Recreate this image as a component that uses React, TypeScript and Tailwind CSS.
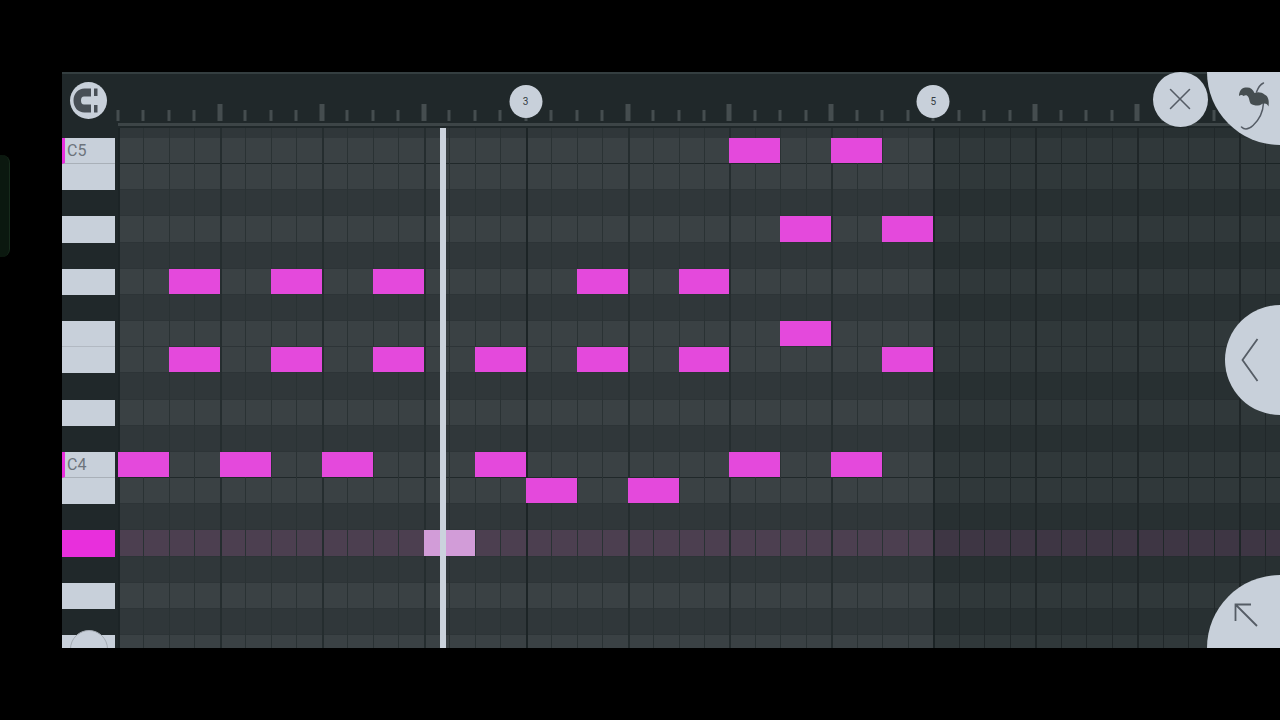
import { X } from 'lucide-react';

const STEPS = 96;
const ROWS = 24;
const PATTERN_END = 32;
const ACTIVE_ROW = 15;

// Counted downwards from C
const BLACK_KEYS = [2, 4, 6, 9, 11];

const NOTES: { row: number; steps: number[] }[] = [
  { row: 0, steps: [24, 28] },
  { row: 3, steps: [26, 30] },
  { row: 5, steps: [2, 6, 10, 18, 22] },
  { row: 7, steps: [26] },
  { row: 8, steps: [2, 6, 10, 14, 18, 22, 30] },
  { row: 12, steps: [0, 4, 8, 14, 24, 28] },
  { row: 13, steps: [16, 20] },
  { row: 15, steps: [12] },
];

const rows = Array.from({ length: ROWS }, (_, i) => i);
const steps = Array.from({ length: STEPS }, (_, i) => i);
const isBlack = (row: number) => BLACK_KEYS.includes(row % 12);

function MagnetIcon() {
  return (
    <svg viewBox="0 0 37 37" className="size-full" fill="#484f56" aria-hidden="true">
      <path d="M21 6.500H14.500C8 6.500 3.500 11.500 3.500 18.500S8 30.500 14.500 30.500H21V22.500H14Q11 22.500 11 18.500T14 14.500H21Z" />
      <path d="M24 6.500h3.500v7.500H24zM24 23h3.500v7.500H24z" />
    </svg>
  );
}

function UmbrellaIcon() {
  return (
    <svg viewBox="0 0 32 50" className="h-[50px] w-8" aria-hidden="true">
      <path d="M25.500 1C22 2.500 20 6 18.500 10M25.500 21C25 30 21 38 15 43.500C10 48 6 47.500 3.500 45" fill="none" stroke="#555c65" strokeWidth="1.500" strokeLinecap="round" />
      <path d="M1 14C1 9 4 5 8 5.500C12 5 15 7 16.500 11C20 9.500 24 10.500 26.500 12.500C30 14 31.500 18 30.500 24.500C29.500 22.500 28.500 21.500 26.500 21.500C24 21 23 23.500 20 23.500C16.500 23.500 14.500 23 12.500 21.500C11 19 11.500 16 10 14.500C8.500 12.500 7 13 5.500 14C4 12.500 2.500 13 1 14Z" fill="#464e51" />
    </svg>
  );
}

function Ruler() {
  return (
    <div className="grid h-[49px] w-[2446px] shrink-0 grid-cols-[repeat(96,minmax(0,1fr))]">
      {steps.map((step) => {
        const bar = step % 16 === 0;
        const beat = step % 4 === 0 && !bar;
        return (
          <div key={step} className="relative flex items-end pb-[2px]">
            <span className={beat ? 'h-[17px] w-[5px] -translate-x-1/2 bg-[#454d4f]' : 'h-[11px] w-[3px] -translate-x-1/2 bg-[#454d4f]'} />
            {bar && step > 0 && step <= PATTERN_END && (
              <span className="absolute bottom-[5px] left-0 flex size-[33px] -translate-x-1/2 items-center justify-center rounded-full bg-[#c8d0da] text-[10px] text-[#353c42]">
                {step / 8 + 1}
              </span>
            )}
          </div>
        );
      })}
    </div>
  );
}

function Keyboard() {
  return (
    <div className="w-14 shrink-0 overflow-hidden pt-[10px] pr-[3px]">
      <div className="grid h-[628px] grid-rows-[repeat(24,minmax(0,1fr))]">
        {rows.map((row) => {
          if (isBlack(row)) return <button key={row} type="button" aria-label="Black key" className="bg-[#20282a]" />;
          if (row === ACTIVE_ROW) return <button key={row} type="button" aria-label="A3" className="bg-[#e82fdc]" />;
          if (row % 12 === 0) {
            return (
              <button key={row} type="button" className="flex items-center border-b border-l-[3px] border-b-[#a9b0b8] border-l-[#e82fdc] bg-[#c8d0da] pl-[2px] text-base text-[#6d747c]">
                C{5 - row / 12}
              </button>
            );
          }
          return (
            <button key={row} type="button" aria-label="White key" className={row % 12 === 7 ? 'border-b border-[#b2b9c2] bg-[#c8d0da]' : 'bg-[#c8d0da]'} />
          );
        })}
      </div>
    </div>
  );
}

function rowColor(row: number) {
  if (row === ACTIVE_ROW) return 'bg-[#4c3f50]';
  return isBlack(row) ? 'bg-[#30373a]' : 'bg-[#3a4144]';
}

function lineColor(step: number) {
  if (step % 16 === 0) return 'border-l-2 border-[#1c2426]';
  if (step % 4 === 0) return step > PATTERN_END ? 'border-l-2 border-[#1f2628]' : 'border-l-2 border-[#252d2f]';
  return step > PATTERN_END ? 'border-l border-[#21282a]' : 'border-l border-[#2a3234]';
}

function NoteGrid() {
  return (
    <div className="relative min-w-0 flex-1 overflow-hidden bg-[#30373a]">
      <div className="grid h-[638px] w-[2446px] grid-cols-[repeat(96,minmax(0,1fr))] grid-rows-[10px_repeat(24,minmax(0,1fr))]">
        {rows.map((row) => (
          <div
            key={row}
            className={`col-span-full border-b ${row % 12 === 0 ? 'border-[#20282a]' : 'border-[#2d3437]'} ${rowColor(row)}`}
            style={{ gridRow: row + 2 }}
          />
        ))}
        <div className="bg-[#0a1414]/20" style={{ gridColumn: `${PATTERN_END + 1} / -1`, gridRow: '1 / -1' }} />
        {steps.map((step) => (
          <div key={step} className={lineColor(step)} style={{ gridColumn: step + 1, gridRow: '1 / -1' }} />
        ))}
        {NOTES.map(({ row, steps: starts }) =>
          starts.map((start) => (
            <button
              key={`${row}-${start}`}
              type="button"
              aria-label="Note"
              className={row === ACTIVE_ROW ? 'mb-px bg-[#d29cd8]' : 'mb-px bg-[#e449dc]'}
              style={{ gridColumn: `${start + 1} / span 2`, gridRow: row + 2 }}
            />
          )),
        )}
      </div>
      <div className="absolute inset-y-0 left-[322px] w-[6px] bg-[#cbd3dd]" />
    </div>
  );
}

export default function App() {
  return (
    <div className="relative flex h-screen overflow-hidden bg-black py-[72px] pl-[62px] font-[Roboto,sans-serif]">
      <div className="absolute top-[155px] left-0 h-[102px] w-[10px] rounded-r-lg border-r border-[#172b1c] bg-[#0b180f]" />

      <main className="relative flex min-w-0 flex-1 flex-col overflow-hidden bg-[#20282a]">
        <header className="flex h-14 shrink-0 border-t-2 border-[#343e40]">
          <div className="w-14 shrink-0 px-2 pt-2">
            <button type="button" aria-label="Snap" className="size-[37px] rounded-full bg-[#c8d0da]">
              <MagnetIcon />
            </button>
          </div>
          <div className="min-w-0 flex-1">
            <Ruler />
            <div className="h-[3px] bg-[#3d4547]" />
          </div>
        </header>
        <div className="flex min-h-0 flex-1">
          <Keyboard />
          <NoteGrid />
        </div>

        <button type="button" aria-label="Keyboard options" className="absolute -bottom-5 left-2 size-[38px] rounded-full border border-[#a5acb4] bg-[#c8d0da]" />
        <button type="button" aria-label="Close" className="absolute top-0 right-[72px] flex size-[55px] items-center justify-center rounded-full bg-[#c8d0da] pr-[2px] pb-[2px] text-[#555c65]">
          <X size={38} strokeWidth={1} aria-hidden="true" />
        </button>
        <button type="button" aria-label="Menu" className="absolute top-0 right-0 flex size-[73px] justify-end rounded-bl-full bg-[#c8d0da] pt-[10px] pr-[10px]">
          <UmbrellaIcon />
        </button>
        <button type="button" aria-label="Open panel" className="absolute top-1/2 right-0 flex h-[110px] w-[55px] -translate-y-1/2 items-center rounded-l-full bg-[#c8d0da] pl-4">
          <svg viewBox="0 0 18 44" className="h-11 w-[18px]" fill="none" stroke="#555c65" strokeWidth="1.800" aria-hidden="true">
            <path d="M16.500 1 1.500 22l15 21" />
          </svg>
        </button>
        <button type="button" aria-label="Expand" className="absolute right-0 bottom-0 size-[73px] rounded-tl-full bg-[#c8d0da] pt-[6px] pl-[27px]">
          <svg viewBox="0 0 24 24" className="size-6" fill="none" stroke="#555c65" strokeWidth="1.800" aria-hidden="true">
            <path d="M17 1.500H1.500V18M1.500 1.500l21.500 21.500" />
          </svg>
        </button>
      </main>
    </div>
  );
}
